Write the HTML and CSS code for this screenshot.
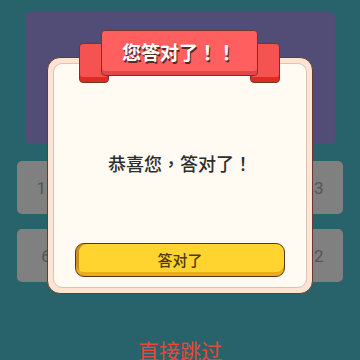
FILE: index.html
```html
<!DOCTYPE html>
<html lang="zh-TW">
<head>
  <meta charset="UTF-8">
  <title>答题</title>
  <link rel="stylesheet" href="styles.css">
</head>
<body>
  <div class="page">
    <div class="question-panel"></div>

    <div class="options">
      <div class="option-row">
        <div class="option">11</div>
        <div class="option">2</div>
        <div class="option">4</div>
        <div class="option">7</div>
        <div class="option">13</div>
      </div>
      <div class="option-row">
        <div class="option">6</div>
        <div class="option">8</div>
        <div class="option">9</div>
        <div class="option">10</div>
        <div class="option">12</div>
      </div>
    </div>

    <div class="skip">直接跳过</div>
  </div>

  <!-- 弹窗 -->
  <div class="dialog">
    <div class="ribbon">
      <div class="ribbon-tail left"></div>
      <div class="ribbon-tail right"></div>
      <div class="ribbon-main">您答对了！！</div>
    </div>
    <div class="dialog-inner">
      <div class="dialog-text">恭喜您，答对了！</div>
      <div class="dialog-btn">答对了</div>
    </div>
  </div>
</body>
</html>
```

FILE: styles.css
```css
html, body {
  margin: 0;
  padding: 0;
  width: 100%;
  height: 100%;
  background: #28636b;
  overflow: hidden;
  font-family: "Noto Sans CJK TC", "Noto Sans", sans-serif;
}

.page {
  padding-top: 12px;
  display: flex;
  flex-direction: column;
}

.question-panel {
  margin: 0 25px;
  height: 132px;
  background: #524d76;
  border-radius: 5px;
}

.options {
  margin: 17px 17px 0;
  display: flex;
  flex-direction: column;
  gap: 15px;
}

.option-row {
  display: flex;
  gap: 9px;
}

.option {
  flex: 1;
  height: 53px;
  background: #808080;
  border-radius: 5px;
  color: #555;
  font-size: 17px;
  font-family: "Roboto", sans-serif;
  display: flex;
  align-items: center;
  justify-content: center;
}

.skip {
  margin-top: 55px;
  text-align: center;
  color: #e8473a;
  font-size: 21px;
  line-height: 26px;
}

.dialog {
  position: absolute;
  left: 47px;
  top: 57px;
  width: 266px;
  height: 237px;
  box-sizing: border-box;
  background: #fbe4d4;
  border: 1.5px solid #6a3a30;
  border-radius: 13px;
  padding: 5px;
}

.dialog-inner {
  height: 100%;
  box-sizing: border-box;
  background: #fffaf2;
  border: 1px solid #e2c2b0;
  border-radius: 9px;
  display: flex;
  flex-direction: column;
  align-items: center;
  padding-top: 86px;
}

.dialog-text {
  font-size: 18px;
  line-height: 26px;
  font-weight: 500;
  color: #2e2e2e;
}

.dialog-btn {
  margin-top: 67px;
  width: 210px;
  height: 34px;
  box-sizing: border-box;
  background: #ffd42e;
  border: 1.5px solid #5e3518;
  border-radius: 9px;
  box-shadow: inset 0 -4px 0 #e9ad1e, inset 3px 0 0 #c98f1a;
  color: #4a3a12;
  font-size: 15px;
  font-weight: 500;
  display: flex;
  align-items: center;
  justify-content: center;
  padding-bottom: 2px;
}

.ribbon {
  position: absolute;
  left: 30.5px;
  top: -28.5px;
  width: 201px;
  height: 55px;
}

.ribbon-tail {
  position: absolute;
  top: 13px;
  width: 30px;
  height: 40px;
  background: #f55252;
  border: 1.5px solid #6a3a30;
  border-radius: 4px;
  box-shadow: inset 0 -5px 0 #e02a22;
  box-sizing: border-box;
}

.ribbon-tail.left {
  left: 0;
}

.ribbon-tail.right {
  right: 0;
}

.ribbon-main {
  position: absolute;
  left: 22px;
  top: 0;
  width: 157px;
  height: 46px;
  box-sizing: border-box;
  background: #ff5f5f;
  border: 1.5px solid #6a3a30;
  border-radius: 4px;
  box-shadow: inset 0 -4px 0 #e04848;
  color: #fff;
  font-size: 19px;
  font-weight: bold;
  text-align: center;
  line-height: 42px;
  text-shadow: 1px 2px 0 #5a2a26;
}
```
